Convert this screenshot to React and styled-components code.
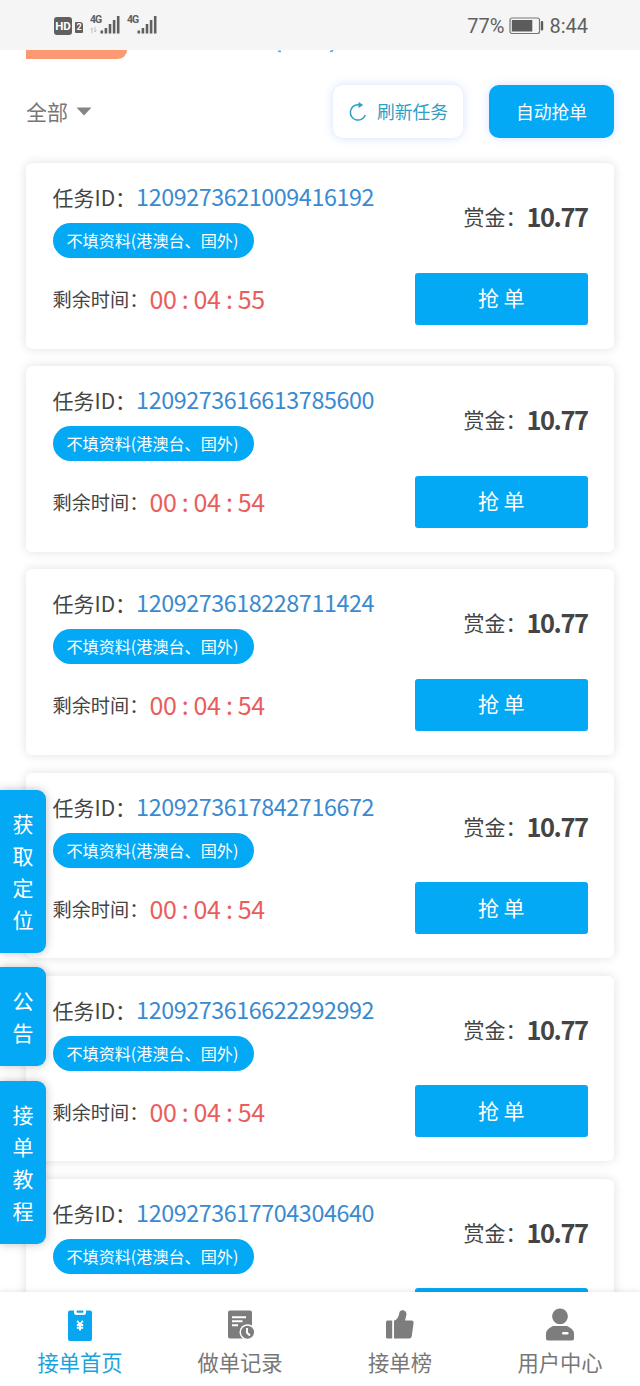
import React from "react";
import styled, { createGlobalStyle } from "styled-components";

const tasks = [
  { id: "1209273621009416192", time: "00 : 04 : 55" },
  { id: "1209273616613785600", time: "00 : 04 : 54" },
  { id: "1209273618228711424", time: "00 : 04 : 54" },
  { id: "1209273617842716672", time: "00 : 04 : 54" },
  { id: "1209273616622292992", time: "00 : 04 : 54" },
  { id: "1209273617704304640", time: "00 : 04 : 54" },
];

const shortcuts = ["获取定位", "公告", "接单教程"];

const Signal = () => (
  <svg width="20" height="18" viewBox="0 0 20 18" fill="#606060">
    <rect x="0.5" y="14.5" width="2.6" height="3" />
    <rect x="4.6" y="12" width="2.6" height="5.5" />
    <rect x="8.7" y="8" width="2.6" height="9.5" />
    <rect x="12.8" y="4" width="2.6" height="13.5" />
    <rect x="16.9" y="0" width="2.6" height="17.5" />
  </svg>
);

const StatusBar = () => (
  <Status>
    <HdBadge>HD</HdBadge>
    <SimBadge>2</SimBadge>
    <Network>
      <NetworkLabel>
        <span>4G</span>
        <Arrows width="7" height="6" viewBox="0 0 7 6">
          <path d="M2 6V1L.5 2.500M5 0v5l1.500-1.500" fill="none" stroke="#bdbdbd" />
        </Arrows>
      </NetworkLabel>
      <Signal />
    </Network>
    <Network>
      <NetworkLabel>
        <span>4G</span>
      </NetworkLabel>
      <Signal />
    </Network>
    <StatusRight>
      <span>77%</span>
      <svg width="35" height="18" viewBox="0 0 35 18">
        <rect x="1" y="1" width="29.5" height="15.500" rx="2" fill="none" stroke="#777" strokeWidth="1.2" />
        <rect x="2.8" y="3" width="20.5" height="11.5" fill="#5c5c5c" />
        <rect x="31.8" y="4" width="2.4" height="9.5" rx="1" fill="#5c5c5c" />
      </svg>
      <span>8:44</span>
    </StatusRight>
  </Status>
);

const TaskCard = ({ id, time }) => (
  <Card>
    <Info>
      <TaskId>
        任务ID：<strong>{id}</strong>
      </TaskId>
      <Tag>不填资料(港澳台、国外)</Tag>
      <Remaining>
        剩余时间：<strong>{time}</strong>
      </Remaining>
    </Info>
    <Action>
      <Reward>
        赏金：<strong>10.77</strong>
      </Reward>
      <GrabButton>抢 单</GrabButton>
    </Action>
  </Card>
);

const HomeIcon = () => (
  <svg width="34" height="36" viewBox="0 0 34 36">
    <rect x="5" y="3.5" width="24" height="30.5" rx="2" fill="#08a5f0" />
    <path d="M11 3v2.500q0 2.500 2.500 2.500h7q2.500 0 2.500-2.500V3z" fill="#fff" />
    <rect x="13.500" y="3.500" width="7" height="2.200" rx="1" fill="#08a5f0" />
    <path d="M14.200 13.800l2.800 3.700 2.800-3.700M17 17v6.500M13.800 18h6.400M13.800 20.800h6.400" fill="none" stroke="#fff" strokeWidth="1.900" />
  </svg>
);

const RecordIcon = () => (
  <svg width="34" height="36" viewBox="0 0 34 36">
    <rect x="5" y="3.5" width="24" height="28" rx="2" fill="#7d7d7d" />
    <path d="M9 10.200h14M9 14.200h10.500M9 18.200h6" stroke="#fff" strokeWidth="2" />
    <circle cx="24.500" cy="25.200" r="8" fill="#fff" />
    <circle cx="24.500" cy="25.200" r="6.500" fill="#7d7d7d" />
    <path d="M24 21v4.800l3 2.700" fill="none" stroke="#fff" strokeWidth="1.900" />
  </svg>
);

const RankIcon = () => (
  <svg width="34" height="36" viewBox="0 0 34 36" fill="#7d7d7d">
    <path d="M4.500 13.500h4.700v18H4.500q-1.500 0-1.500-1.500V15q0-1.500 1.500-1.500z" />
    <path d="M11 13.700c3-1 4.700-3.700 5.300-7.700.3-2 1.500-2.800 3.200-2.800 3 0 4.500 2.300 3.800 5.300l-1.300 5h6.500q2.300 0 2.100 2.300l-1.800 13.200q-.3 2.500-2.800 2.500H11z" />
  </svg>
);

const UserIcon = () => (
  <svg width="34" height="36" viewBox="0 0 34 36" fill="#7d7d7d">
    <circle cx="17" cy="9.300" r="7.900" />
    <path d="M10 19h14q7 3 7 8v4.500q0 2-2 2H5q-2 0-2-2V27q0-5 7-8z" />
    <rect x="19" y="25" width="6.500" height="2.600" rx="1.300" fill="#fff" />
  </svg>
);

const tabs = [
  { label: "接单首页", icon: <HomeIcon />, active: true },
  { label: "做单记录", icon: <RecordIcon /> },
  { label: "接单榜", icon: <RankIcon /> },
  { label: "用户中心", icon: <UserIcon /> },
];

const App = () => {
  return (
    <Page>
      <GlobalStyle />
      <StatusBar />
      <Content>
        <BannerEnd>
          <OrangeLabel />
          <svg width="60" height="3" viewBox="0 0 60 3" fill="none" stroke="#5fa4dc">
            <path d="M1 .8q1.500 1 3 .4" strokeWidth="1.600" />
            <path d="M53 1.500q2 0 3-1.500" strokeWidth="1.500" />
          </svg>
        </BannerEnd>
        <Toolbar>
          <Filter>
            <span>全部</span>
            <svg width="16" height="9" viewBox="0 0 16 9">
              <path d="M.5.500h15L8 8.500z" fill="#858585" />
            </svg>
          </Filter>
          <RefreshButton>
            <svg width="20" height="20" viewBox="0 0 20 20">
              <path d="M13 2.700H10A7.700 7.700 0 1 0 17.300 13" fill="none" stroke="#2d9fc4" strokeWidth="1.500" />
              <path d="M10.500 0l4.700 3-4.700 3z" fill="#2d9fc4" />
            </svg>
            <span>刷新任务</span>
          </RefreshButton>
          <AutoButton>
            <span>自动抢单</span>
          </AutoButton>
        </Toolbar>
        <List>
          {tasks.map((task) => (
            <TaskCard key={task.id} {...task} />
          ))}
        </List>
      </Content>
      <Shortcuts>
        {shortcuts.map((text) => (
          <Shortcut key={text}>{text}</Shortcut>
        ))}
      </Shortcuts>
      <TabBar>
        {tabs.map(({ label, icon, active }) => (
          <Tab key={label} $active={active}>
            {icon}
            <span>{label}</span>
          </Tab>
        ))}
      </TabBar>
    </Page>
  );
};

const GlobalStyle = createGlobalStyle`
  * {
    box-sizing: border-box;
  }

  body {
    margin: 0;
    background: #fff;
    color: #444;
    font-family: "Noto Sans CJK SC", sans-serif;
  }

  svg {
    display: block;
    flex: none;
  }

  strong {
    font-weight: 400;
  }

  button {
    border: 0;
    padding: 0;
    font-family: inherit;
  }
`;

const Page = styled.div`
  position: relative;
  display: flex;
  flex-direction: column;
  width: 640px;
  height: 1386px;
  overflow: hidden;
  white-space: nowrap;
`;

const Status = styled.header`
  flex: none;
  display: flex;
  align-items: center;
  height: 50px;
  padding: 0 52px 0 54px;
  background: #f5f5f5;
  color: #606060;
  font-family: Roboto, sans-serif;
`;

const HdBadge = styled.span`
  width: 18px;
  height: 18px;
  margin-top: 1px;
  border-radius: 3px;
  background: #606060;
  color: #fff;
  font-size: 11.5px;
  font-weight: 700;
  line-height: 18px;
  text-align: center;
`;

const SimBadge = styled.span`
  width: 8px;
  height: 11px;
  margin: 5px 0 0 3px;
  border-radius: 1px 3px 1px 1px;
  background: #606060;
  color: #fff;
  font-size: 9px;
  font-weight: 700;
  line-height: 11px;
  text-align: center;
`;

const Network = styled.div`
  display: flex;
  align-items: flex-end;
  height: 18px;
  margin-left: 7px;
`;

const NetworkLabel = styled.div`
  display: flex;
  flex-direction: column;
  width: 10px;
  height: 19px;
  font-size: 10.5px;
  font-weight: 700;
  line-height: 10px;
  letter-spacing: -1px;
`;

const Arrows = styled.svg`
  margin-top: 2px;
`;

const StatusRight = styled.div`
  display: flex;
  align-items: center;
  gap: 5px;
  margin-left: auto;
  padding-top: 1px;
  font-size: 20px;
`;

const Content = styled.main`
  flex: 1;
  min-height: 0;
  overflow: hidden;
  padding: 0 26px;
`;

const BannerEnd = styled.div`
  display: flex;
  gap: 150px;
  height: 35px;
`;

const OrangeLabel = styled.div`
  width: 101px;
  height: 8.5px;
  border-radius: 0 0 12px 0;
  background: #fb9a72;
`;

const Toolbar = styled.div`
  display: flex;
  align-items: center;
  height: 53px;
  margin-bottom: 25px;

  span {
    padding-bottom: 2px;
  }
`;

const Filter = styled.div`
  display: flex;
  align-items: center;
  gap: 8px;
  margin-right: auto;
  color: #777;
  font-size: 21px;
`;

const ToolButton = styled.button`
  display: flex;
  align-items: center;
  justify-content: center;
  height: 53px;
  border-radius: 10px;
  font-size: 17.8px;
`;

const RefreshButton = styled(ToolButton)`
  gap: 9px;
  width: 130px;
  margin-right: 26px;
  background: #fff;
  color: #2d9fc4;
  box-shadow: 0 0 10px rgba(90, 140, 255, 0.28);
`;

const AutoButton = styled(ToolButton)`
  width: 125px;
  background: #04a9f5;
  color: #fff;
  box-shadow: 0 0 10px rgba(90, 140, 255, 0.25);
`;

const List = styled.div`
  display: flex;
  flex-direction: column;
  gap: 17.7px;
`;

const Card = styled.article`
  flex: none;
  display: flex;
  justify-content: space-between;
  height: 185.5px;
  padding: 0 26.5px;
  border-radius: 6px;
  background: #fff;
  box-shadow: 0 0 11px rgba(0, 0, 0, 0.12);
`;

const Info = styled.div`
  padding-top: 18px;
`;

const TaskId = styled.div`
  display: flex;
  height: 32px;
  font-size: 21px;
  line-height: 32px;

  strong {
    color: #3a8ad0;
    font-size: 23.3px;
    line-height: 31px;
    letter-spacing: -0.41px;
  }
`;

const Tag = styled.div`
  width: 201px;
  height: 35px;
  margin-top: 10px;
  padding-left: 14px;
  border-radius: 18px;
  background: #04a9f5;
  color: #fff;
  font-size: 16.1px;
  line-height: 35px;
`;

const Remaining = styled.div`
  display: flex;
  height: 32px;
  margin-top: 25px;
  font-size: 19.2px;
  line-height: 32px;

  strong {
    margin-left: 1px;
    color: #ea5d5d;
    font-size: 25px;
    line-height: 31px;
    letter-spacing: -0.35px;
  }
`;

const Action = styled.div`
  display: flex;
  flex-direction: column;
  align-items: flex-end;
  padding-top: 37px;
`;

const Reward = styled.div`
  display: flex;
  height: 32px;
  font-size: 21px;
  line-height: 32px;

  strong {
    font-size: 25.5px;
    font-weight: 700;
    letter-spacing: -1.5px;
  }
`;

const GrabButton = styled.button`
  width: 172.5px;
  height: 52px;
  margin-top: 40.5px;
  padding-bottom: 3px;
  border-radius: 3px;
  background: #04a9f5;
  color: #fff;
  font-size: 21px;
`;

/* floats over the list, stuck to the left edge */
const Shortcuts = styled.nav`
  position: absolute;
  top: 789.5px;
  left: 0;
  display: flex;
  flex-direction: column;
  gap: 14.5px;
`;

const Shortcut = styled.div`
  width: 46px;
  padding: 17px 12px 18px 12.5px;
  border-radius: 0 9px 9px 0;
  background: #04a9f5;
  box-shadow: 0 0 10px rgba(0, 0, 0, 0.25);
  color: #fff;
  font-size: 21px;
  line-height: 32px;
  white-space: normal;
  word-break: break-all;
`;

const TabBar = styled.nav`
  position: relative;
  flex: none;
  display: grid;
  grid-template-columns: repeat(4, 1fr);
  height: 94px;
  background: #fff;
  box-shadow: 0 0 6px rgba(0, 0, 0, 0.13);
`;

const Tab = styled.div`
  display: flex;
  flex-direction: column;
  align-items: center;
  padding-top: 15px;
  color: ${({ $active }) => ($active ? "#1ba4dc" : "#777")};
  font-size: 21.3px;
  line-height: 38px;
`;

export default App;
